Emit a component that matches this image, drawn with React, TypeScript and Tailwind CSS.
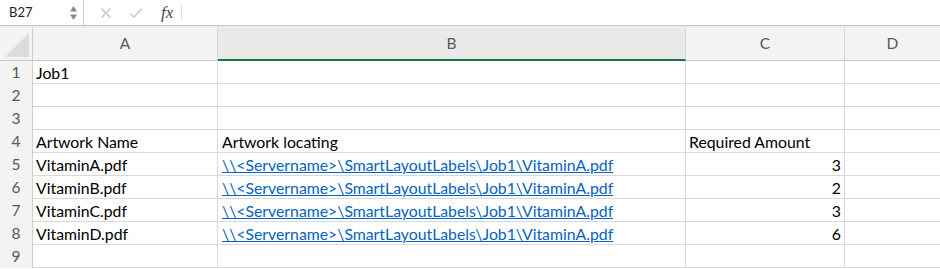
import React from "react";

const rows: { a: string; b: string; c: string; link?: boolean; num?: boolean }[] = [
  { a: "Job1", b: "", c: "" },
  { a: "", b: "", c: "" },
  { a: "", b: "", c: "" },
  { a: "Artwork Name", b: "Artwork locating", c: "Required Amount" },
  { a: "VitaminA.pdf", b: "\\\\<Servername>\\SmartLayoutLabels\\Job1\\VitaminA.pdf", c: "3", link: true, num: true },
  { a: "VitaminB.pdf", b: "\\\\<Servername>\\SmartLayoutLabels\\Job1\\VitaminA.pdf", c: "2", link: true, num: true },
  { a: "VitaminC.pdf", b: "\\\\<Servername>\\SmartLayoutLabels\\Job1\\VitaminA.pdf", c: "3", link: true, num: true },
  { a: "VitaminD.pdf", b: "\\\\<Servername>\\SmartLayoutLabels\\Job1\\VitaminA.pdf", c: "6", link: true, num: true },
  { a: "", b: "", c: "" },
];

const gridCols = "grid grid-cols-[33px_185px_468px_159px_1fr]";

export default function App() {
  return (
    <div
      className="w-[940px] h-[269px] overflow-hidden bg-white text-[#000]"
      style={{ fontFamily: "Lato, 'Open Sans', sans-serif" }}
    >
      {/* Formula bar */}
      <div className="flex h-[26px] border-b border-[#c4c4c4] bg-white">
        <div className="flex w-[84px] items-center justify-between border-r border-[#cfcfcf] pl-[9px] pr-[5px]">
          <span className="text-[13px] text-[#222]">B27</span>
          <svg width="9" height="18" viewBox="0 0 9 18">
            <path d="M4.5 2 L8 7.5 L1 7.5 Z" fill="#8a8a8a" />
            <path d="M4.5 16 L8 10.5 L1 10.5 Z" fill="#8a8a8a" />
          </svg>
        </div>
        <div className="flex items-center pl-[16px]">
          <svg width="12" height="12" viewBox="0 0 12 12" className="mr-[17px]">
            <path d="M1.5 1.5 L10.5 10.5 M10.5 1.5 L1.5 10.5" stroke="#c8c8c8" strokeWidth="1.6" />
          </svg>
          <svg width="14" height="12" viewBox="0 0 14 12" className="mr-[18px]">
            <path d="M1 6.5 L5 10 L13 1.5" stroke="#c8c8c8" strokeWidth="1.6" fill="none" />
          </svg>
          <span
            className="text-[17px] italic text-[#444] leading-none"
            style={{ fontFamily: "'Liberation Serif', 'DejaVu Serif', serif" }}
          >
            fx
          </span>
          <div className="ml-[8px] h-[15px] w-px bg-[#e0e0e0]" />
        </div>
      </div>
      <div className="h-[2px] bg-[#ededed]" />

      {/* Column headers */}
      <div className={`${gridCols} h-[33px] bg-[#f3f3f3] border-b border-[#c8c8c8]`}>
        <div className="relative border-r border-[#cfcfcf]">
          <svg width="26" height="26" viewBox="0 0 26 26" className="absolute left-[4px] top-[4px]">
            <path d="M25 1 L25 25 L1 25 Z" fill="#dcdcdc" />
          </svg>
        </div>
        <div className="flex items-center justify-center border-r border-[#d6d6d6] text-[15.5px] text-[#595959]">A</div>
        <div className="flex items-center justify-center border-r border-[#d6d6d6] border-b-2 border-b-[#217346] bg-[#e9e9e9] text-[15.5px] text-[#595959] -mb-px">B</div>
        <div className="flex items-center justify-center border-r border-[#d6d6d6] text-[15.5px] text-[#595959]">C</div>
        <div className="flex items-center justify-center text-[15.5px] text-[#595959]">D</div>
      </div>

      {/* Rows */}
      {rows.map((r, i) => (
        <div key={i} className={`${gridCols} h-[23px] border-b border-[#d9d9d9]`}>
          <div className="flex items-center justify-center border-r border-[#cfcfcf] bg-[#f3f3f3] text-[15.5px] text-[#595959]">
            {i + 1}
          </div>
          <div className="flex items-center border-r border-[#d9d9d9] pl-[3px] text-[15.8px] whitespace-nowrap">{r.a}</div>
          <div className="flex items-center border-r border-[#d9d9d9] pl-[4px] text-[15.8px] whitespace-nowrap">
            {r.link ? <span className="text-[#0563c1] underline">{r.b}</span> : r.b}
          </div>
          <div
            className={`flex items-center border-r border-[#d9d9d9] text-[15.8px] whitespace-nowrap ${
              r.num ? "justify-end pr-[3px]" : "pl-[3px]"
            }`}
          >
            {r.c}
          </div>
          <div />
        </div>
      ))}
    </div>
  );
}
